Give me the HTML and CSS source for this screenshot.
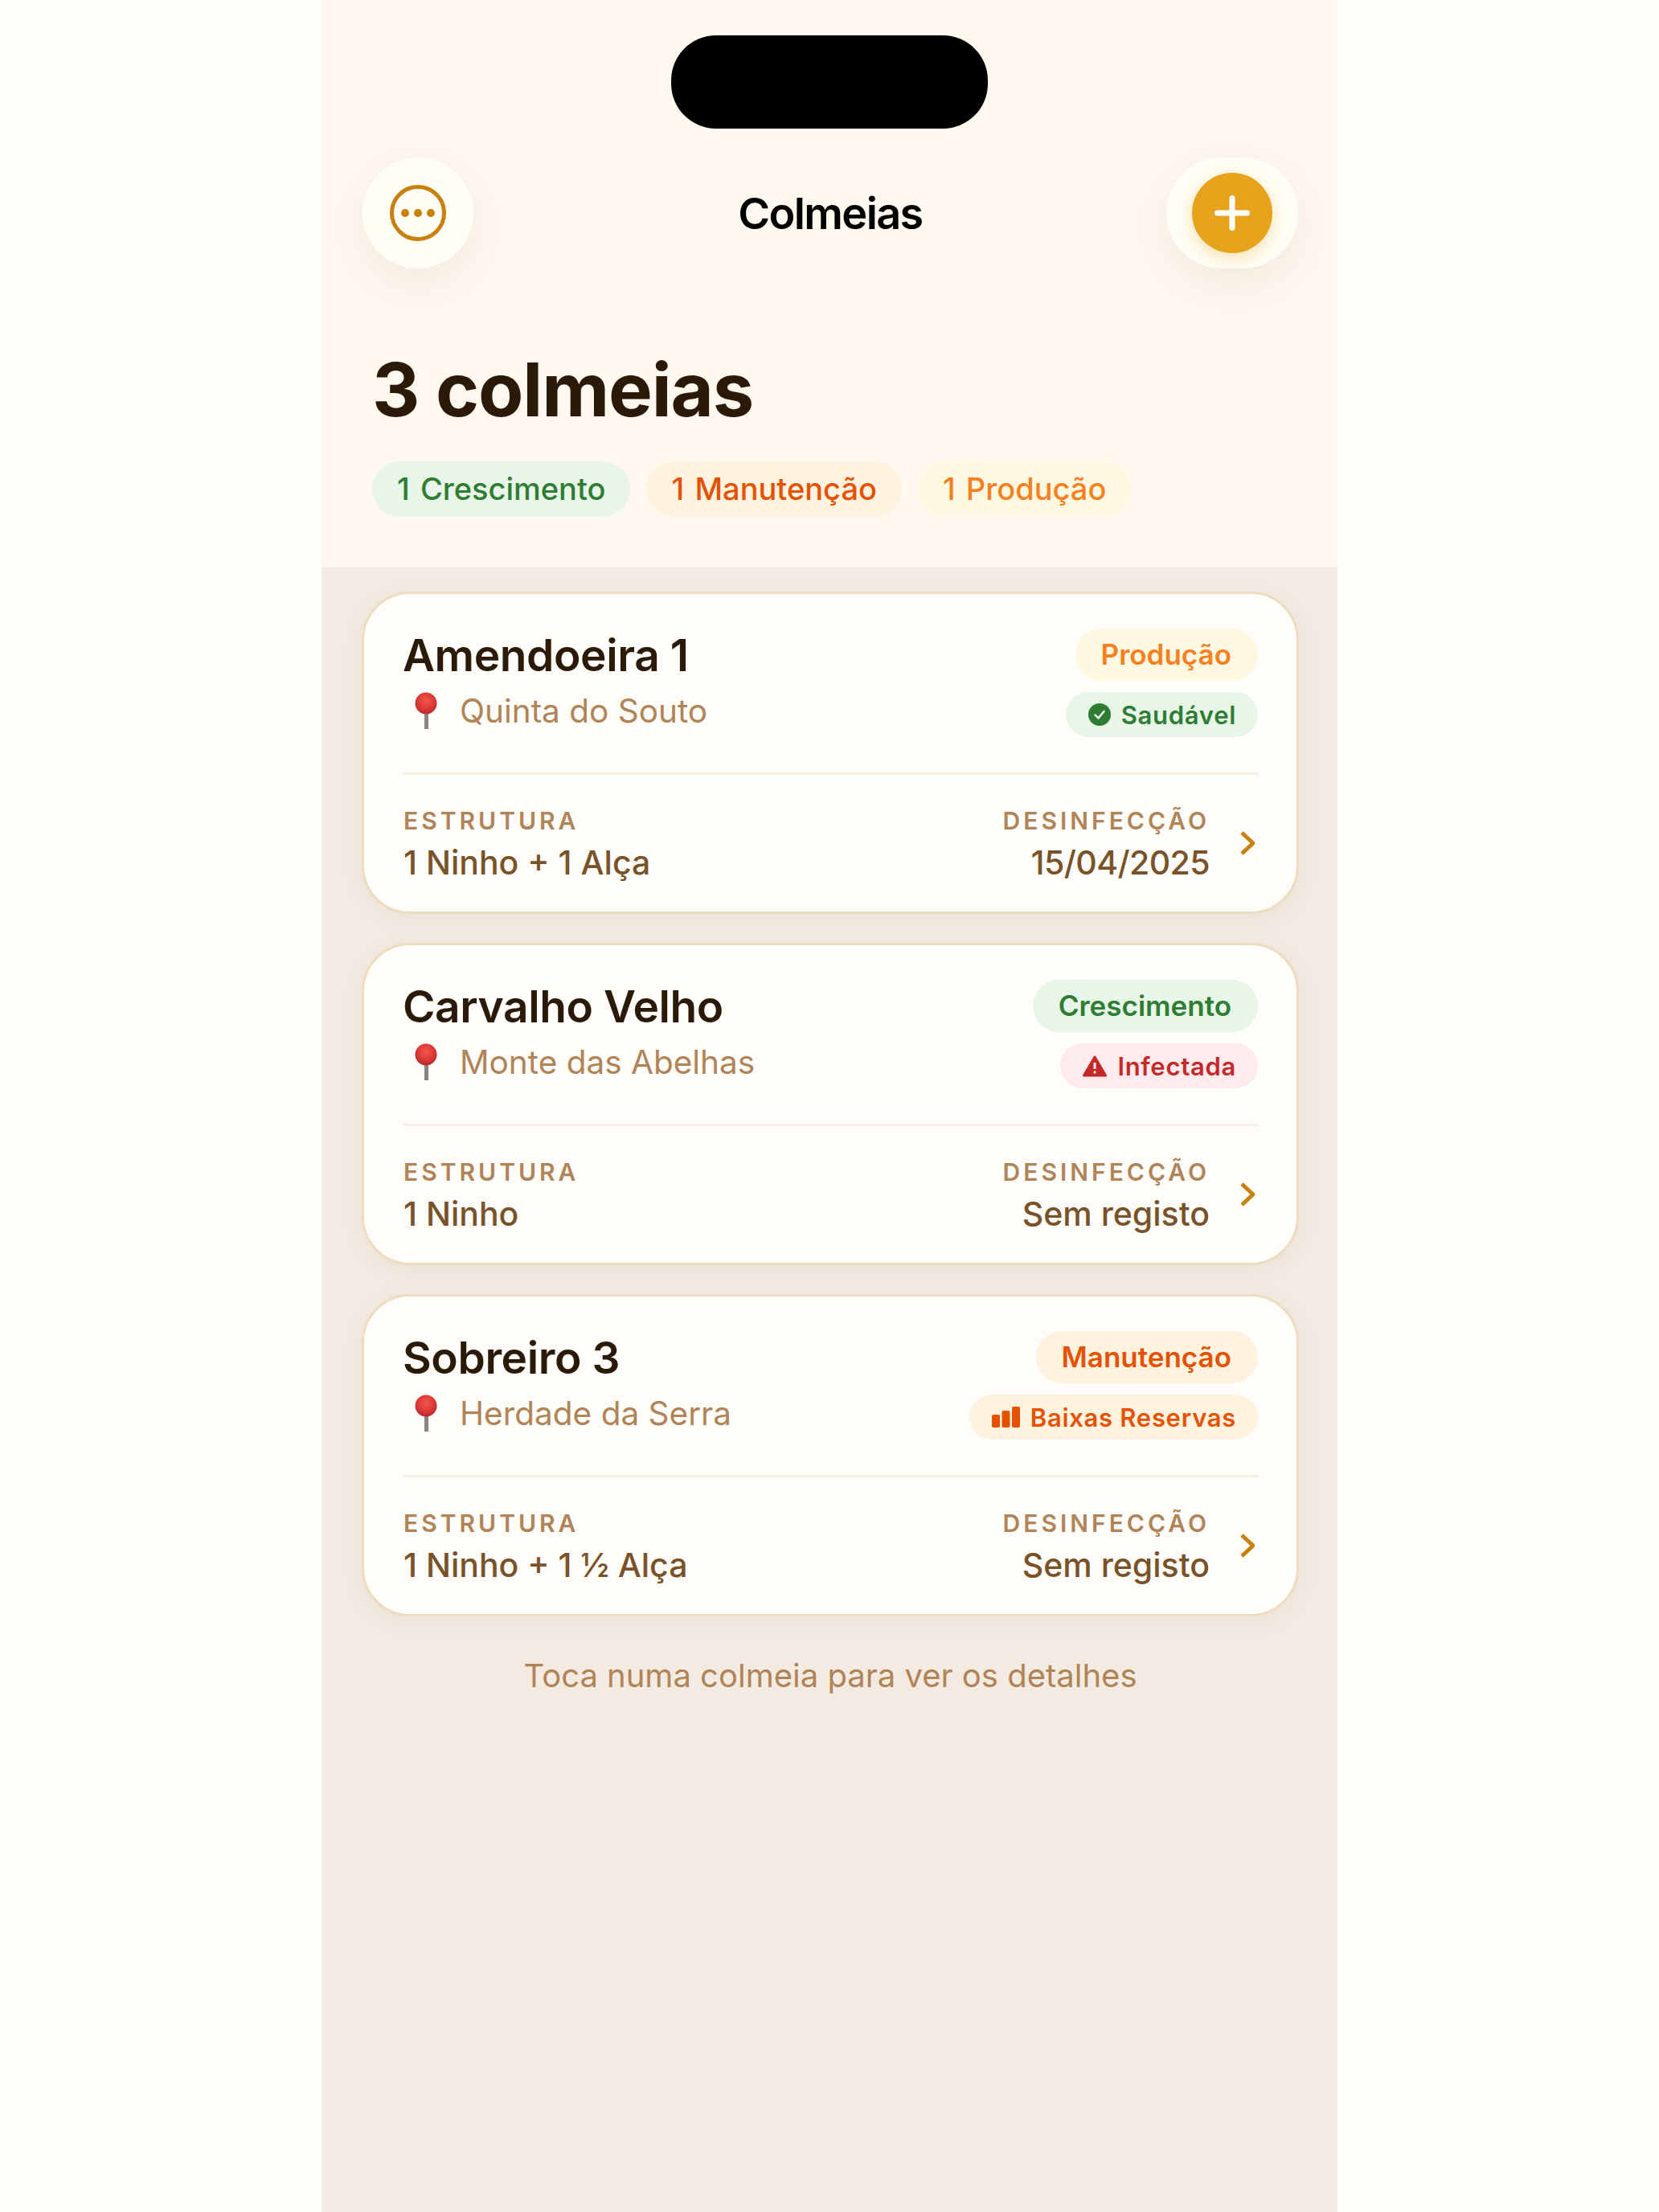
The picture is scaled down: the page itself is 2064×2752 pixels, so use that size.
FILE: index.html
```html
<!DOCTYPE html>
<html lang="pt">
<head>
  <meta charset="UTF-8">
  <title>Colmeias</title>
  <link rel="stylesheet" href="styles.css">
</head>
<body>
  <div class="phone">
    <header class="top">
      <div class="notch"></div>
      <nav class="nav">
        <button class="nav-btn" type="button" aria-label="Mais">
          <svg class="icon-more" viewBox="0 0 70 70">
            <circle cx="35" cy="35" r="32.5" fill="none" stroke="#c8800f" stroke-width="5"/>
            <circle cx="19" cy="35" r="5" fill="#c8800f"/>
            <circle cx="35" cy="35" r="5" fill="#c8800f"/>
            <circle cx="51" cy="35" r="5" fill="#c8800f"/>
          </svg>
        </button>
        <div class="nav-title">Colmeias</div>
        <button class="nav-btn nav-btn-wide" type="button" aria-label="Adicionar">
          <span class="add-circle">
            <svg class="icon-plus" viewBox="0 0 44 44">
              <path d="M22 3.500v37M3.500 22h37" stroke="#fff" stroke-width="7" stroke-linecap="round" fill="none"/>
            </svg>
          </span>
        </button>
      </nav>
      <h1 class="count">3 colmeias</h1>
      <div class="summary">
        <span class="pill green">1 Crescimento</span>
        <span class="pill orange">1 Manutenção</span>
        <span class="pill amber">1 Produção</span>
      </div>
    </header>

    <main class="list">
      <article class="card">
        <div class="card-top">
          <div class="card-info">
            <h2 class="card-name">Amendoeira 1</h2>
            <div class="card-place">
              <svg class="pin" viewBox="0 0 28 46"><use href="#pin-shape"/></svg>
              <span>Quinta do Souto</span>
            </div>
          </div>
          <div class="card-badges">
            <span class="badge amber">Produção</span>
            <span class="status green">
              <svg class="status-icon" viewBox="0 0 28 28">
                <circle cx="14" cy="14" r="14" fill="#2e7d32"/>
                <path d="M8.500 14.500l4 4 7-8.500" fill="none" stroke="#fff" stroke-width="2.400" stroke-linecap="round" stroke-linejoin="round"/>
              </svg>
              Saudável
            </span>
          </div>
        </div>
        <div class="card-bottom">
          <div class="field">
            <div class="field-label">ESTRUTURA</div>
            <div class="field-value">1 Ninho + 1 Alça</div>
          </div>
          <div class="field field-right">
            <div class="field-label">DESINFECÇÃO</div>
            <div class="field-value field-date">15/04/2025</div>
          </div>
          <svg class="chevron" viewBox="0 0 18 30"><path d="M2 2l14 13L2 28" fill="none" stroke="#c8800f" stroke-width="5"/></svg>
        </div>
      </article>

      <article class="card">
        <div class="card-top">
          <div class="card-info">
            <h2 class="card-name">Carvalho Velho</h2>
            <div class="card-place">
              <svg class="pin" viewBox="0 0 28 46"><use href="#pin-shape"/></svg>
              <span>Monte das Abelhas</span>
            </div>
          </div>
          <div class="card-badges">
            <span class="badge green">Crescimento</span>
            <span class="status red">
              <svg class="status-icon status-icon-alert" viewBox="0 0 30 27">
                <path d="M15 2L28.500 25H1.500z" fill="#c62828" stroke="#c62828" stroke-width="3" stroke-linejoin="round"/>
                <path d="M15 9v8" stroke="#ffebee" stroke-width="3" fill="none"/>
                <circle cx="15" cy="21" r="1.700" fill="#ffebee"/>
              </svg>
              Infectada
            </span>
          </div>
        </div>
        <div class="card-bottom">
          <div class="field">
            <div class="field-label">ESTRUTURA</div>
            <div class="field-value">1 Ninho</div>
          </div>
          <div class="field field-right">
            <div class="field-label">DESINFECÇÃO</div>
            <div class="field-value">Sem registo</div>
          </div>
          <svg class="chevron" viewBox="0 0 18 30"><path d="M2 2l14 13L2 28" fill="none" stroke="#c8800f" stroke-width="5"/></svg>
        </div>
      </article>

      <article class="card">
        <div class="card-top">
          <div class="card-info">
            <h2 class="card-name">Sobreiro 3</h2>
            <div class="card-place">
              <svg class="pin" viewBox="0 0 28 46"><use href="#pin-shape"/></svg>
              <span>Herdade da Serra</span>
            </div>
          </div>
          <div class="card-badges">
            <span class="badge orange">Manutenção</span>
            <span class="status orange">
              <svg class="status-icon status-icon-bars" viewBox="0 0 35 26">
                <rect x="0" y="10" width="10" height="16" rx="2" fill="#e65100"/>
                <rect x="12.500" y="5" width="10" height="21" rx="2" fill="#e65100"/>
                <rect x="25" y="0" width="10" height="26" rx="2" fill="#e65100"/>
              </svg>
              Baixas Reservas
            </span>
          </div>
        </div>
        <div class="card-bottom">
          <div class="field">
            <div class="field-label">ESTRUTURA</div>
            <div class="field-value">1 Ninho + 1 ½ Alça</div>
          </div>
          <div class="field field-right">
            <div class="field-label">DESINFECÇÃO</div>
            <div class="field-value">Sem registo</div>
          </div>
          <svg class="chevron" viewBox="0 0 18 30"><path d="M2 2l14 13L2 28" fill="none" stroke="#c8800f" stroke-width="5"/></svg>
        </div>
      </article>

      <p class="hint">Toca numa colmeia para ver os detalhes</p>
    </main>
  </div>

  <!-- pin shared by the three cards -->
  <svg class="defs" aria-hidden="true">
    <defs>
      <radialGradient id="pin-ball" cx="50%" cy="38%" r="60%">
        <stop offset="0" stop-color="#f0584c"/>
        <stop offset="0.6" stop-color="#df3a36"/>
        <stop offset="1" stop-color="#b92a2e"/>
      </radialGradient>
      <g id="pin-shape">
        <rect x="12" y="22" width="5" height="24" fill="#8b8582"/>
        <circle cx="14" cy="14" r="13.500" fill="url(#pin-ball)"/>
      </g>
    </defs>
  </svg>
</body>
</html>
```

FILE: styles.css
```css
* {
  box-sizing: border-box;
}

body {
  margin: 0;
  background-color: #fffdf9;
  font-family: Inter, 'Noto Sans', sans-serif;
}

.defs {
  position: absolute;
  width: 0;
  height: 0;
}

.phone {
  width: 1264px;
  height: 2752px;
  margin: 0 auto;
  overflow: hidden;
  background-color: #f3ebe2;
}

/* header */
.top {
  height: 706px;
  padding-top: 44px;
  background-color: #fff8ef;
}

.notch {
  width: 394px;
  height: 116px;
  margin: 0 auto;
  background-color: #000;
  border-radius: 56px;
}

.nav {
  display: grid;
  grid-template-columns: 1fr auto 1fr;
  align-items: center;
  margin-top: 36px;
  padding: 0 49px 0 51px;
}

.nav-btn {
  display: flex;
  align-items: center;
  justify-content: center;
  justify-self: start;
  width: 138px;
  height: 138px;
  padding: 0;
  background-color: #fffdf4;
  border: none;
  border-radius: 69px;
  box-shadow: 0 18px 60px rgba(90, 60, 20, 0.08);
}

.nav-btn-wide {
  justify-self: end;
  width: 164px;
}

.icon-more {
  width: 70px;
  height: 70px;
}

.add-circle {
  display: flex;
  align-items: center;
  justify-content: center;
  width: 100px;
  height: 100px;
  background-color: #e8a31c;
  border-radius: 50%;
  box-shadow: 0 6px 20px rgba(232, 163, 28, 0.3);
}

.icon-plus {
  width: 44px;
  height: 44px;
}

.nav-title {
  font-size: 54px;
  font-weight: 600;
  letter-spacing: -1.6px;
  color: #000;
}

.count {
  margin: 95px 0 0 63px;
  font-size: 92px;
  line-height: 112px;
  font-weight: 700;
  letter-spacing: -1.1px;
  color: #2c1a08;
}

.summary {
  display: flex;
  gap: 20px;
  margin: 33px 0 0 63px;
}

.pill {
  height: 69px;
  padding: 0 31px;
  border-radius: 35px;
  font-size: 38px;
  line-height: 69px;
  font-weight: 500;
  word-spacing: 3px;
}

.green {
  background-color: #e8f5e9;
  color: #2e7d32;
}

.orange {
  background-color: #fff3e0;
  color: #e65100;
}

.amber {
  background-color: #fff8e1;
  color: #f6801f;
}

.red {
  background-color: #ffebee;
  color: #c62828;
}

/* cards */
.list {
  display: flex;
  flex-direction: column;
  gap: 36px;
  padding: 30px 48px 0 50px;
}

.card {
  height: 401px;
  padding: 42px 48px 0 49px;
  background-color: #fffdf9;
  border: 3px solid #eedcc0;
  border-radius: 60px;
  box-shadow: 0 6px 28px rgba(90, 60, 20, 0.06);
}

.card-top {
  display: flex;
  justify-content: space-between;
  height: 183px;
  border-bottom: 3px solid #f8eee2;
}

.card-name {
  margin: 0 0 0 -1px;
  font-size: 55px;
  line-height: 68px;
  font-weight: 600;
  letter-spacing: -0.4px;
  color: #2c1a08;
}

.card-place {
  display: flex;
  align-items: center;
  gap: 28px;
  height: 60px;
  margin-top: 5px;
  padding-left: 14px;
  font-size: 40.500px;
  color: #b08457;
}

.pin {
  width: 28px;
  height: 46px;
}

.card-badges {
  display: flex;
  flex-direction: column;
  align-items: flex-end;
  gap: 14px;
  margin-top: 1px;
}

.badge {
  height: 65px;
  padding: 0 33px 0 32px;
  border-radius: 33px;
  font-size: 35px;
  line-height: 65px;
  font-weight: 600;
}

.status {
  display: flex;
  align-items: center;
  gap: 13px;
  height: 56px;
  padding: 0 27px 0 28px;
  border-radius: 28px;
  font-size: 31px;
  font-weight: 600;
  letter-spacing: 0.7px;
}

.status-icon {
  width: 28px;
  height: 28px;
}

.status-icon-alert {
  width: 30px;
  height: 27px;
}

.status-icon-bars {
  width: 35px;
  height: 26px;
}

.card-bottom {
  display: flex;
  align-items: center;
  padding-top: 38px;
}

.field {
  flex: 1;
}

.field-right {
  text-align: right;
}

.field-label {
  font-size: 30px;
  line-height: 38px;
  font-weight: 600;
  letter-spacing: 4px;
  color: #b08457;
}

.field-value {
  margin-top: 7px;
  font-size: 41px;
  line-height: 52px;
  font-weight: 500;
  color: #7a5229;
}

.field-date {
  letter-spacing: -0.6px;
}

.chevron {
  width: 18px;
  height: 30px;
  margin: -3px 4px 0 38px;
}

.hint {
  margin: 12px 0 0;
  font-size: 40px;
  line-height: 52px;
  text-align: center;
  color: #b08457;
}
```
